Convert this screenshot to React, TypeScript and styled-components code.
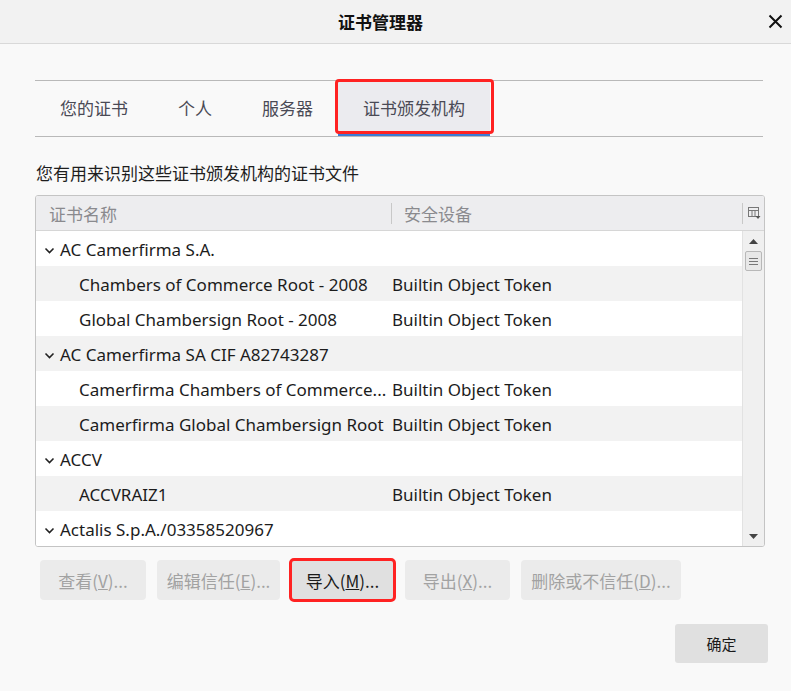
import React from "react";
import styled, { createGlobalStyle } from "styled-components";

const GlobalStyle = createGlobalStyle`
  html, body {
    margin: 0;
    padding: 0;
    background: #f9f9f9;
  }
  body {
    font-family: "Noto Sans", "Noto Sans CJK SC", sans-serif;
    color: #1c1c1c;
  }
`;

interface Row {
  name: string;
  device?: string;
  group?: boolean;
}

const rows: Row[] = [
  { name: "AC Camerfirma S.A.", group: true },
  { name: "Chambers of Commerce Root - 2008", device: "Builtin Object Token" },
  { name: "Global Chambersign Root - 2008", device: "Builtin Object Token" },
  { name: "AC Camerfirma SA CIF A82743287", group: true },
  { name: "Camerfirma Chambers of Commerce...", device: "Builtin Object Token" },
  { name: "Camerfirma Global Chambersign Root", device: "Builtin Object Token" },
  { name: "ACCV", group: true },
  { name: "ACCVRAIZ1", device: "Builtin Object Token" },
  { name: "Actalis S.p.A./03358520967", group: true },
];

const tabs = ["您的证书", "个人", "服务器", "证书颁发机构"];

const Chevron = () => (
  <svg width="11" height="7" viewBox="0 0 11 7">
    <path d="M1.5 1.5 L5.5 5.5 L9.5 1.5" fill="none" stroke="#222" strokeWidth="1.6" />
  </svg>
);

const App: React.FC = () => {
  return (
    <Window>
      <GlobalStyle />
      <TitleBar>
        <Title>证书管理器</Title>
        <CloseButton>
          <svg width="15" height="15" viewBox="0 0 15 15">
            <path d="M1.5 1.5 L13.5 13.5 M13.5 1.5 L1.5 13.5" stroke="#111" strokeWidth="2" />
          </svg>
        </CloseButton>
      </TitleBar>

      <Body>
        <TabStrip>
          {tabs.map((t, i) => (
            <Tab key={t} selected={i === 3} marked={i === 3}>
              {t}
            </Tab>
          ))}
        </TabStrip>

        <Description>您有用来识别这些证书颁发机构的证书文件</Description>

        <Table>
          <HeaderRow>
            <HeaderCell width={342}>证书名称</HeaderCell>
            <HeaderCell divided>安全设备</HeaderCell>
            <PickerCell>
              <svg width="14" height="14" viewBox="0 0 14 14">
                <rect x="1.5" y="1.5" width="10" height="9" fill="none" stroke="#777" />
                <path d="M1.5 4.5 H11.5 M5 4.5 V10.5 M8 4.5 V10.5" stroke="#777" />
                <path d="M8.5 10 L13.5 10 L11 13 Z" fill="#555" />
              </svg>
            </PickerCell>
          </HeaderRow>
          <TableBody>
            <RowList>
              {rows.map((r, i) => (
                <TableRow key={r.name} striped={i % 2 === 1}>
                  <NameCell group={r.group}>
                    {r.group && (
                      <ChevronBox>
                        <Chevron />
                      </ChevronBox>
                    )}
                    {r.name}
                  </NameCell>
                  <DeviceCell>{r.device}</DeviceCell>
                </TableRow>
              ))}
            </RowList>
            <Scrollbar>
              <ScrollArrow>
                <svg width="9" height="5" viewBox="0 0 9 5">
                  <path d="M0 5 L4.5 0 L9 5 Z" fill="#444" />
                </svg>
              </ScrollArrow>
              <Thumb>
                <svg width="9" height="9" viewBox="0 0 9 9">
                  <path d="M0 1.5 H9 M0 4.5 H9 M0 7.5 H9" stroke="#777" />
                </svg>
              </Thumb>
              <ScrollTrack />
              <ScrollArrow>
                <svg width="9" height="5" viewBox="0 0 9 5">
                  <path d="M0 0 L9 0 L4.5 5 Z" fill="#444" />
                </svg>
              </ScrollArrow>
            </Scrollbar>
          </TableBody>
        </Table>

        <ButtonRow>
          <ActionButton width={106} disabled>
            查看(<u>V</u>)...
          </ActionButton>
          <ActionButton width={123} disabled>
            编辑信任(<u>E</u>)...
          </ActionButton>
          <ActionButton width={103} marked>
            导入(<u>M</u>)...
          </ActionButton>
          <ActionButton width={105} disabled>
            导出(<u>X</u>)...
          </ActionButton>
          <ActionButton width={160} disabled>
            删除或不信任(<u>D</u>)...
          </ActionButton>
        </ButtonRow>

        <Footer>
          <OkButton>确定</OkButton>
        </Footer>
      </Body>
    </Window>
  );
};

const Window = styled.div`
  width: 791px;
  height: 691px;
  background: #f9f9f9;
  display: flex;
  flex-direction: column;
  overflow: hidden;
`;

const TitleBar = styled.div`
  height: 43px;
  background: #f2f2f2;
  border-bottom: 1px solid #d9d9d9;
  display: flex;
  align-items: center;
  justify-content: center;
  padding-right: 30px;
  position: relative;
`;

const Title = styled.div`
  font-family: "Noto Sans CJK SC", sans-serif;
  font-size: 17px;
  font-weight: 700;
  color: #111;
`;

const CloseButton = styled.div`
  position: absolute;
  right: 8px;
  top: 14px;
  display: flex;
`;

const Body = styled.div`
  flex: 1;
  display: flex;
  flex-direction: column;
  padding: 36px 28px 0 35px;
`;

const TabStrip = styled.div`
  display: flex;
  border-top: 1px solid #b9b9b9;
  border-bottom: 1px solid #b9b9b9;
  height: 55px;
`;

const Tab = styled.div<{ selected?: boolean; marked?: boolean }>`
  position: relative;
  display: flex;
  align-items: center;
  padding: 0 25px 2px;
  font-family: "Noto Sans CJK SC", sans-serif;
  font-size: 17px;
  color: #4a4a55;
  background: ${(p) => (p.selected ? "#ebebef" : "transparent")};
  box-shadow: ${(p) => (p.selected ? "inset 0 -3px 0 #3b7bd6" : "none")};
  ${(p) =>
    p.marked &&
    `
    &::after {
      content: "";
      position: absolute;
      left: -3px;
      right: -4px;
      top: -2px;
      bottom: 2px;
      border: 3px solid #ff2222;
      border-radius: 4px;
    }
  `}
`;

const Description = styled.div`
  font-family: "Noto Sans CJK SC", sans-serif;
  font-size: 17px;
  color: #1e1e1e;
  margin: 23px 0 0 1px;
  height: 35px;
  line-height: 25px;
`;

const Table = styled.div`
  width: 728px;
  border: 1px solid #c4c4c4;
  border-radius: 3px;
  background: #ffffff;
  overflow: hidden;
`;

const HeaderRow = styled.div`
  display: flex;
  height: 34px;
  background: #ededef;
  border-bottom: 1px solid #d6d6d6;
  align-items: center;
`;

const HeaderCell = styled.div<{ width?: number; divided?: boolean }>`
  ${(p) => (p.width ? `width: ${p.width}px;` : "flex: 1;")}
  padding-left: ${(p) => (p.divided ? "12px" : "13px")};
  font-family: "Noto Sans CJK SC", sans-serif;
  font-size: 17px;
  color: #8a8a8e;
  border-left: ${(p) => (p.divided ? "1px solid #c8c8c8" : "none")};
  line-height: 21px;
`;

const PickerCell = styled.div`
  width: 21px;
  height: 21px;
  border-left: 1px solid #c8c8c8;
  display: flex;
  align-items: center;
  justify-content: center;
`;

const TableBody = styled.div`
  display: flex;
  height: 315px;
`;

const RowList = styled.div`
  flex: 1;
  display: flex;
  flex-direction: column;
`;

const TableRow = styled.div<{ striped?: boolean }>`
  display: flex;
  height: 35px;
  align-items: center;
  background: ${(p) => (p.striped ? "#f2f2f2" : "#ffffff")};
  font-size: 17px;
  color: #1c1c1c;
  padding-top: 1px;
  box-sizing: border-box;
`;

const NameCell = styled.div<{ group?: boolean }>`
  width: ${(p) => (p.group ? "auto" : "313px")};
  padding-left: ${(p) => (p.group ? "8px" : "43px")};
  display: flex;
  align-items: center;
  white-space: nowrap;
`;

const ChevronBox = styled.span`
  display: flex;
  width: 16px;
  margin-top: 2px;
`;

const DeviceCell = styled.div`
  white-space: nowrap;
`;

const Scrollbar = styled.div`
  width: 21px;
  background: #f0f0f0;
  border-left: 1px solid #e2e2e2;
  display: flex;
  flex-direction: column;
  align-items: center;
`;

const ScrollArrow = styled.div`
  height: 20px;
  display: flex;
  align-items: center;
  justify-content: center;
`;

const Thumb = styled.div`
  width: 17px;
  height: 20px;
  background: #e8e8e8;
  border: 1px solid #b8b8b8;
  border-radius: 2px;
  box-sizing: border-box;
  display: flex;
  align-items: center;
  justify-content: center;
`;

const ScrollTrack = styled.div`
  flex: 1;
`;

const ButtonRow = styled.div`
  display: flex;
  gap: 11px;
  margin: 13px 0 0 5px;
`;

const ActionButton = styled.div<{ width: number; disabled?: boolean; marked?: boolean }>`
  position: relative;
  width: ${(p) => p.width}px;
  height: 40px;
  display: flex;
  align-items: center;
  justify-content: center;
  border-radius: 4px;
  font-family: "Noto Sans CJK SC", sans-serif;
  font-size: 17px;
  background: ${(p) => (p.disabled ? "#ebebeb" : "#e0e0e0")};
  color: ${(p) => (p.disabled ? "#a2a2a2" : "#1a1a1a")};
  ${(p) =>
    p.marked &&
    `
    &::after {
      content: "";
      position: absolute;
      inset: -2px;
      border: 3px solid #ff2222;
      border-radius: 5px;
    }
  `}
`;

const Footer = styled.div`
  display: flex;
  justify-content: flex-end;
  margin: 24px -5px 0 0;
`;

const OkButton = styled.div`
  width: 93px;
  height: 39px;
  border-radius: 3px;
  background: #e0e0e0;
  display: flex;
  align-items: center;
  justify-content: center;
  font-family: "Noto Sans CJK SC", sans-serif;
  font-size: 15px;
  color: #1a1a1a;
`;

export default App;
